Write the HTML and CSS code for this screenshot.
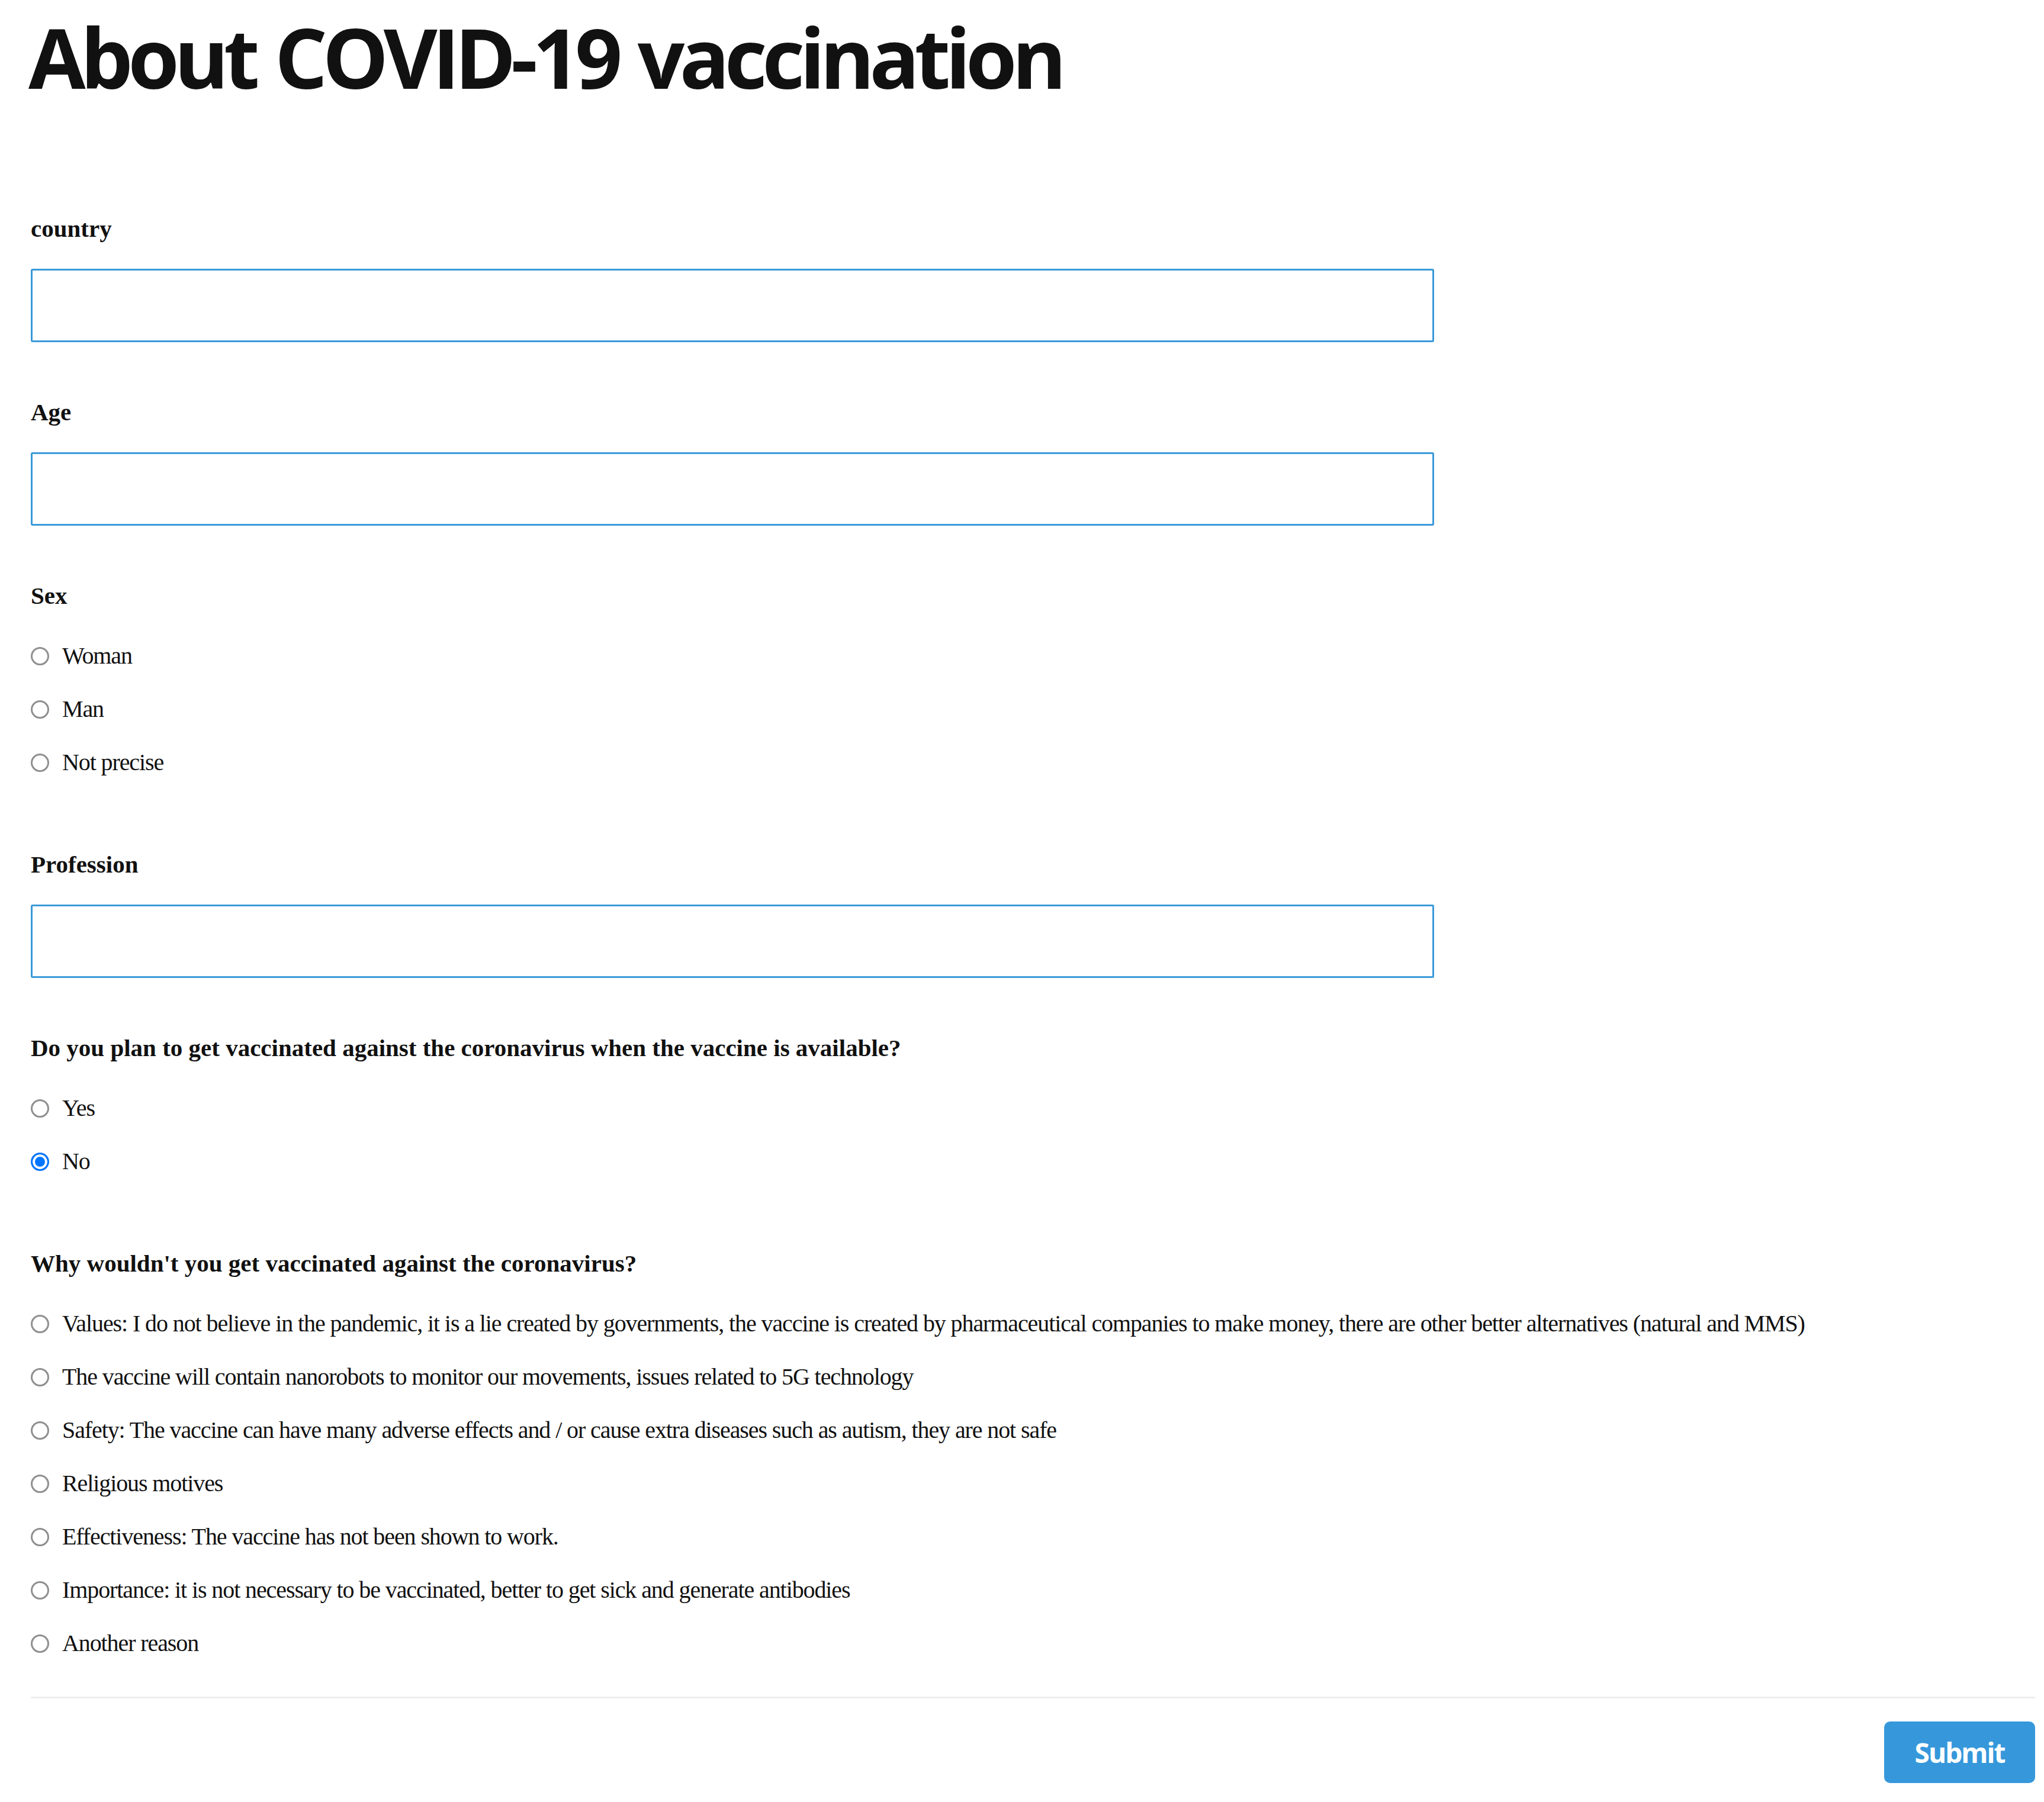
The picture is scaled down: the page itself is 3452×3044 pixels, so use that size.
FILE: index.html
```html
<!DOCTYPE html>
<html lang="en">
<head>
<meta charset="utf-8">
<title>About COVID-19 vaccination</title>
<link rel="stylesheet" href="styles.css">
</head>
<body>
<main class="page">
  <h1 class="title">About COVID-19 vaccination</h1>
  <form class="survey">
    <div class="field field-first">
      <label class="label" for="country">country</label>
      <input class="text-input" id="country" type="text">
    </div>
    <div class="field">
      <label class="label" for="age">Age</label>
      <input class="text-input" id="age" type="text">
    </div>
    <div class="field">
      <div class="label">Sex</div>
      <div class="options">
        <label class="option"><input class="radio" type="radio" name="sex"><span>Woman</span></label>
        <label class="option"><input class="radio" type="radio" name="sex"><span>Man</span></label>
        <label class="option"><input class="radio" type="radio" name="sex"><span>Not precise</span></label>
      </div>
    </div>
    <div class="field field-after-options">
      <label class="label" for="profession">Profession</label>
      <input class="text-input" id="profession" type="text">
    </div>
    <div class="field">
      <div class="label">Do you plan to get vaccinated against the coronavirus when the vaccine is available?</div>
      <div class="options">
        <label class="option"><input class="radio" type="radio" name="plan"><span>Yes</span></label>
        <label class="option"><input class="radio" type="radio" name="plan" checked><span>No</span></label>
      </div>
    </div>
    <div class="field field-after-options">
      <div class="label">Why wouldn't you get vaccinated against the coronavirus?</div>
      <div class="options">
        <label class="option"><input class="radio" type="radio" name="why"><span>Values: I do not believe in the pandemic, it is a lie created by governments, the vaccine is created by pharmaceutical companies to make money, there are other better alternatives (natural and MMS)</span></label>
        <label class="option"><input class="radio" type="radio" name="why"><span>The vaccine will contain nanorobots to monitor our movements, issues related to 5G technology</span></label>
        <label class="option"><input class="radio" type="radio" name="why"><span>Safety: The vaccine can have many adverse effects and / or cause extra diseases such as autism, they are not safe</span></label>
        <label class="option"><input class="radio" type="radio" name="why"><span>Religious motives</span></label>
        <label class="option"><input class="radio" type="radio" name="why"><span>Effectiveness: The vaccine has not been shown to work.</span></label>
        <label class="option"><input class="radio" type="radio" name="why"><span>Importance: it is not necessary to be vaccinated, better to get sick and generate antibodies</span></label>
        <label class="option"><input class="radio" type="radio" name="why"><span>Another reason</span></label>
      </div>
    </div>
    <hr class="divider">
    <div class="actions">
      <button class="submit" type="button">Submit</button>
    </div>
  </form>
</main>
</body>
</html>
```

FILE: styles.css
```css
html, body {
  margin: 0;
  padding: 0;
  background: #ffffff;
}

body {
  font-family: "Liberation Serif", "Times New Roman", serif;
  color: #111111;
}

.page {
  padding: 0 15px 0 52px;
}

.title {
  margin: 0 0 0 -4px;
  font-family: "Open Sans", "Noto Sans", sans-serif;
  font-weight: 700;
  font-size: 140px;
  line-height: normal;
  letter-spacing: -8.5px;
  word-spacing: 6px;
  color: #111111;
}

.survey {
  display: flex;
  flex-direction: column;
}

.field {
  display: flex;
  flex-direction: column;
  margin-top: 94px;
}

.field-first {
  margin-top: 171px;
}

.field-after-options {
  margin-top: 103px;
}

.label {
  font-family: "Liberation Serif", "Times New Roman", serif;
  font-weight: 700;
  font-size: 41px;
  line-height: 48px;
  color: #111111;
  margin-bottom: 44px;
}

.text-input {
  box-sizing: border-box;
  width: 70%;
  height: 124px;
  margin: 0;
  border: 3px solid #3a9ad9;
  border-radius: 3px;
  background: #ffffff;
  font-size: 40px;
  padding: 0 20px;
  outline: none;
}

.options {
  display: flex;
  flex-direction: column;
  margin-top: -11px;
}

.option {
  display: flex;
  align-items: center;
  height: 90px;
  font-size: 40px;
  line-height: 48px;
  letter-spacing: -1.1px;
  color: #111111;
}

.radio {
  appearance: none;
  -webkit-appearance: none;
  box-sizing: border-box;
  width: 31px;
  height: 31px;
  margin: 0 22px 0 0;
  flex: none;
  border: 3px solid #8f8f8f;
  border-radius: 50%;
  background: #ffffff;
}

.radio:checked {
  border-color: #0075ff;
  background: #0075ff;
  box-shadow: inset 0 0 0 4px #ffffff;
}

.divider {
  margin: 45px 0 0 0;
  border: 0;
  height: 3px;
  background: #eeeeee;
}

.actions {
  display: flex;
  justify-content: flex-end;
  margin-top: 39px;
}

.submit {
  width: 255px;
  height: 104px;
  border: 0;
  border-radius: 10px;
  background: #3698db;
  color: #ffffff;
  font-family: "Open Sans", "Noto Sans", sans-serif;
  font-weight: 700;
  font-size: 46px;
  letter-spacing: -2px;
  padding: 0;
}
```
